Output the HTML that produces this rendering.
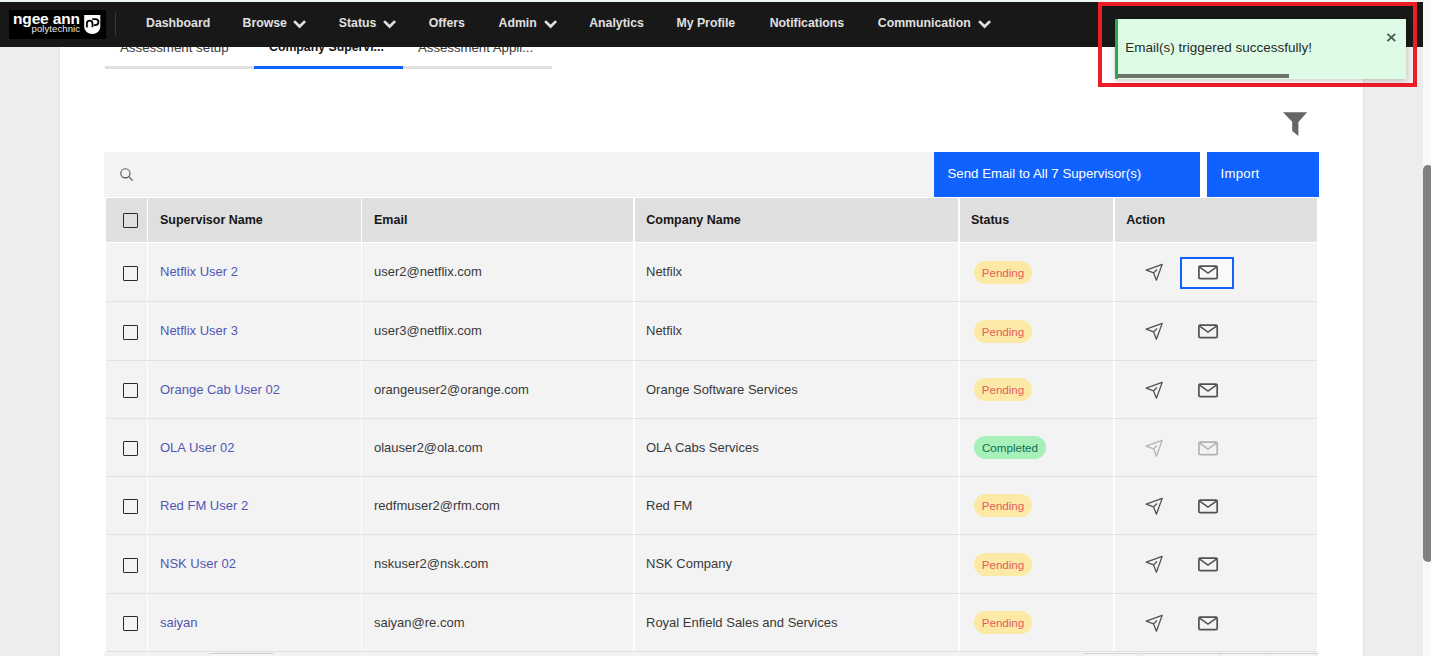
<!DOCTYPE html>
<html><head><meta charset="utf-8">
<style>
*{box-sizing:border-box;margin:0;padding:0}
html,body{width:1431px;height:656px;overflow:hidden;background:#edf5f1;font-family:"Liberation Sans",sans-serif;color:#393939}
.a{position:absolute}
.t{position:absolute;white-space:nowrap;line-height:1}
.nav{position:absolute;left:0;top:2px;width:1423px;height:44.7px;background:#181818}
.navi{position:absolute;top:0;height:44.7px;line-height:43.7px;font-size:12.3px;font-weight:700;color:#e0e0e0;white-space:nowrap}
.chev{position:absolute;top:16.8px}
.cell{position:absolute;background:#f3f3f3}
.hcell{position:absolute;background:#dfdfdf}
.hd{position:absolute;font-size:12.5px;font-weight:700;color:#161616;white-space:nowrap;line-height:1}
.cb{position:absolute;width:15px;height:15px;border:1.5px solid #2b2b2b;border-radius:1px;left:123px}
.sup{position:absolute;left:160px;font-size:13px;color:#4f57b3;white-space:nowrap;line-height:1}
.em{position:absolute;left:374px;font-size:13px;color:#393939;white-space:nowrap;line-height:1}
.co{position:absolute;left:646px;font-size:13px;color:#393939;white-space:nowrap;line-height:1}
.pill{position:absolute;left:974px;height:23px;border-radius:12px;font-size:11.6px;line-height:24px;white-space:nowrap;text-align:center}
.pend{width:58px;background:#fde9a6;color:#e0605e}
.comp{width:72px;background:#a7f0ba;color:#0e6e52}
</style></head><body>

<!-- left/right gray -->
<div class="a" style="left:0;top:46px;width:60px;height:610px;background:#ededeb"></div>
<div class="a" style="left:60px;top:46px;width:1303px;height:610px;background:#ffffff"></div>
<div class="a" style="left:1363px;top:46px;width:60px;height:610px;background:#ededeb"></div>
<div class="a" style="left:59px;top:46px;width:1px;height:610px;background:#e3e3e5"></div>
<div class="a" style="left:1363px;top:46px;width:1px;height:610px;background:#e1e1e4"></div>
<!-- scrollbar -->
<div class="a" style="left:1423px;top:0;width:8px;height:656px;background:#f9f9f9"></div>
<div class="a" style="left:1423px;top:165px;width:10px;height:397px;background:#7f7f7f;border-radius:5px"></div>

<!-- tabs -->
<div class="t" style="left:120px;top:40.5px;font-size:13.3px;color:#393939">Assessment setup</div>
<div class="t" style="left:269px;top:40.5px;font-size:12.3px;font-weight:700;color:#161616">Company Supervi...</div>
<div class="t" style="left:418px;top:40.5px;font-size:13.2px;color:#393939">Assessment Appli...</div>
<div class="a" style="left:104.5px;top:66.3px;width:447.5px;height:2.5px;background:#e0e0e0"></div>
<div class="a" style="left:253.5px;top:66.3px;width:149.5px;height:2.7px;background:#0f62fe"></div>

<!-- nav -->
<div class="nav">
  <div class="a" style="left:9px;top:8px;width:97px;height:29px;background:#000"></div>
  <div class="t" style="left:13px;top:8.6px;font-size:15.5px;font-weight:700;color:#fff;letter-spacing:-0.15px">ngee ann</div>
  <div class="t" style="left:31.5px;top:22.3px;font-size:9.5px;color:#ededed;letter-spacing:0.1px">polytechnic</div>
  <svg class="a" style="left:82px;top:10px" width="22" height="26" viewBox="82 12 22 26">
    <path d="M84.2 14.9 H100.3 V26.5 C100.3 31 96.5 34 92.25 34 C88 34 84.2 31 84.2 26.5 Z" fill="#fff"/>
    <path d="M86.9 27.4 V23.4 C86.9 21.6 88 20.6 89.7 20.6 C91.4 20.6 92.5 21.6 92.5 23.4 V27.2" fill="none" stroke="#000" stroke-width="1.75"/>
    <path d="M92.2 19 H95.2 C97.1 19 98.5 20.3 98.5 22 C98.5 23.7 97.1 25 95.2 25 H93.8" fill="none" stroke="#000" stroke-width="1.75"/>
  </svg>
  <div class="a" style="left:115px;top:11px;width:1px;height:23px;background:#3a3a3a"></div>
  <div class="navi" style="left:146px">Dashboard</div>
  <div class="navi" style="left:242.5px">Browse</div>
  <div class="navi" style="left:338.8px">Status</div>
  <div class="navi" style="left:428.7px">Offers</div>
  <div class="navi" style="left:498.5px">Admin</div>
  <div class="navi" style="left:589.2px">Analytics</div>
  <div class="navi" style="left:676.4px">My Profile</div>
  <div class="navi" style="left:769.7px">Notifications</div>
  <div class="navi" style="left:877.8px">Communication</div>
  <svg class="chev" style="left:292.8px" width="14" height="10" viewBox="0 0 14 10"><path d="M1.1 2.1 L6.6 7.5 L12.1 2.1" fill="none" stroke="#e0e0e0" stroke-width="2.7"/></svg>
  <svg class="chev" style="left:383.4px" width="14" height="10" viewBox="0 0 14 10"><path d="M1.1 2.1 L6.6 7.5 L12.1 2.1" fill="none" stroke="#e0e0e0" stroke-width="2.7"/></svg>
  <svg class="chev" style="left:543.5px" width="14" height="10" viewBox="0 0 14 10"><path d="M1.1 2.1 L6.6 7.5 L12.1 2.1" fill="none" stroke="#e0e0e0" stroke-width="2.7"/></svg>
  <svg class="chev" style="left:977.8px" width="14" height="10" viewBox="0 0 14 10"><path d="M1.1 2.1 L6.6 7.5 L12.1 2.1" fill="none" stroke="#e0e0e0" stroke-width="2.7"/></svg>
</div>

<!-- filter -->
<svg class="a" style="left:1280px;top:110px" width="30" height="28" viewBox="1280 110 30 28">
  <path d="M1283 112.2 H1307.2 L1298.4 122 V136 L1292.2 131 V121.8 Z" fill="#666"/>
</svg>

<!-- search bar -->
<div class="a" style="left:104px;top:152px;width:829.5px;height:45px;background:#f3f3f3"></div>
<svg class="a" style="left:112px;top:160px" width="30" height="30" viewBox="112 160 30 30">
  <circle cx="125.4" cy="173.3" r="4.6" fill="none" stroke="#525252" stroke-width="1.1"/>
  <path d="M128.8 176.7 L132.6 180.6" stroke="#525252" stroke-width="1.2"/>
</svg>
<div class="a" style="left:933.5px;top:152px;width:266.5px;height:45px;background:#0f62fe"></div>
<div class="t" style="left:947.5px;top:167px;font-size:13.25px;color:#fff">Send Email to All 7 Supervisor(s)</div>
<div class="a" style="left:1207px;top:152px;width:111.5px;height:45px;background:#0f62fe"></div>
<div class="t" style="left:1220.5px;top:167px;font-size:13.25px;letter-spacing:0.25px;color:#fff">Import</div>

<!-- table -->
<div class="hcell" style="left:106px;top:198px;width:41px;height:44px"></div>
<div class="hcell" style="left:148px;top:198px;width:212.5px;height:44px"></div>
<div class="hcell" style="left:362px;top:198px;width:271px;height:44px"></div>
<div class="hcell" style="left:635px;top:198px;width:323px;height:44px"></div>
<div class="hcell" style="left:960px;top:198px;width:153px;height:44px"></div>
<div class="hcell" style="left:1115px;top:198px;width:202px;height:44px"></div>
<div class="cb" style="top:213.4px"></div>
<div class="hd" style="left:160px;top:214.0px">Supervisor Name</div>
<div class="hd" style="left:374px;top:214.0px">Email</div>
<div class="hd" style="left:646.3px;top:214.0px">Company Name</div>
<div class="hd" style="left:971px;top:214.0px">Status</div>
<div class="hd" style="left:1126.2px;top:214.0px">Action</div>
<div class="cell" style="left:106px;top:243px;width:41px;height:58px"></div>
<div class="cell" style="left:148px;top:243px;width:212.5px;height:58px"></div>
<div class="cell" style="left:362px;top:243px;width:271px;height:58px"></div>
<div class="cell" style="left:635px;top:243px;width:323px;height:58px"></div>
<div class="cell" style="left:960px;top:243px;width:153px;height:58px"></div>
<div class="cell" style="left:1115px;top:243px;width:202px;height:58px"></div>
<div class="a" style="left:106px;top:301px;width:1211px;height:1px;background:#e2e2e2"></div>
<div class="cb" style="top:265.6px"></div>
<div class="sup" style="top:265.3px">Netflix User 2</div>
<div class="em" style="top:265.3px">user2@netflix.com</div>
<div class="co" style="top:265.3px">Netfilx</div>
<div class="pill pend" style="top:260.9px">Pending</div>
<div class="a" style="left:1180px;top:256.7px;width:54px;height:32px;border:2px solid #0f62fe;background:#f9f9f9"></div>
<svg class="a" style="left:1140px;top:258.0px" width="30" height="28" viewBox="1140 258 30 28"><path d="M1162.2 264.4 L1146.2 270.2 L1153.6 272.9 L1156.4 280.2 Z M1153.6 272.9 L1157 269.5" fill="none" stroke="#525252" stroke-width="1.3" stroke-linejoin="round"/></svg>
<svg class="a" style="left:1190px;top:258.0px" width="36" height="28" viewBox="1190 258 36 28"><rect x="1198.9" y="266.2" width="18.3" height="12.4" rx="1.2" fill="none" stroke="#525252" stroke-width="1.7"/><path d="M1199.3 266.8 L1208 273.1 L1216.8 266.8" fill="none" stroke="#525252" stroke-width="1.6"/></svg>
<div class="cell" style="left:106px;top:302px;width:41px;height:58px"></div>
<div class="cell" style="left:148px;top:302px;width:212.5px;height:58px"></div>
<div class="cell" style="left:362px;top:302px;width:271px;height:58px"></div>
<div class="cell" style="left:635px;top:302px;width:323px;height:58px"></div>
<div class="cell" style="left:960px;top:302px;width:153px;height:58px"></div>
<div class="cell" style="left:1115px;top:302px;width:202px;height:58px"></div>
<div class="a" style="left:106px;top:360px;width:1211px;height:1px;background:#e2e2e2"></div>
<div class="cb" style="top:324.6px"></div>
<div class="sup" style="top:324.3px">Netflix User 3</div>
<div class="em" style="top:324.3px">user3@netflix.com</div>
<div class="co" style="top:324.3px">Netfilx</div>
<div class="pill pend" style="top:319.9px">Pending</div>
<svg class="a" style="left:1140px;top:317.0px" width="30" height="28" viewBox="1140 258 30 28"><path d="M1162.2 264.4 L1146.2 270.2 L1153.6 272.9 L1156.4 280.2 Z M1153.6 272.9 L1157 269.5" fill="none" stroke="#525252" stroke-width="1.3" stroke-linejoin="round"/></svg>
<svg class="a" style="left:1190px;top:317.0px" width="36" height="28" viewBox="1190 258 36 28"><rect x="1198.9" y="266.2" width="18.3" height="12.4" rx="1.2" fill="none" stroke="#525252" stroke-width="1.7"/><path d="M1199.3 266.8 L1208 273.1 L1216.8 266.8" fill="none" stroke="#525252" stroke-width="1.6"/></svg>
<div class="cell" style="left:106px;top:361px;width:41px;height:57px"></div>
<div class="cell" style="left:148px;top:361px;width:212.5px;height:57px"></div>
<div class="cell" style="left:362px;top:361px;width:271px;height:57px"></div>
<div class="cell" style="left:635px;top:361px;width:323px;height:57px"></div>
<div class="cell" style="left:960px;top:361px;width:153px;height:57px"></div>
<div class="cell" style="left:1115px;top:361px;width:202px;height:57px"></div>
<div class="a" style="left:106px;top:418px;width:1211px;height:1px;background:#e2e2e2"></div>
<div class="cb" style="top:383.1px"></div>
<div class="sup" style="top:382.8px">Orange Cab User 02</div>
<div class="em" style="top:382.8px">orangeuser2@orange.com</div>
<div class="co" style="top:382.8px">Orange Software Services</div>
<div class="pill pend" style="top:378.4px">Pending</div>
<svg class="a" style="left:1140px;top:375.5px" width="30" height="28" viewBox="1140 258 30 28"><path d="M1162.2 264.4 L1146.2 270.2 L1153.6 272.9 L1156.4 280.2 Z M1153.6 272.9 L1157 269.5" fill="none" stroke="#525252" stroke-width="1.3" stroke-linejoin="round"/></svg>
<svg class="a" style="left:1190px;top:375.5px" width="36" height="28" viewBox="1190 258 36 28"><rect x="1198.9" y="266.2" width="18.3" height="12.4" rx="1.2" fill="none" stroke="#525252" stroke-width="1.7"/><path d="M1199.3 266.8 L1208 273.1 L1216.8 266.8" fill="none" stroke="#525252" stroke-width="1.6"/></svg>
<div class="cell" style="left:106px;top:419px;width:41px;height:57px"></div>
<div class="cell" style="left:148px;top:419px;width:212.5px;height:57px"></div>
<div class="cell" style="left:362px;top:419px;width:271px;height:57px"></div>
<div class="cell" style="left:635px;top:419px;width:323px;height:57px"></div>
<div class="cell" style="left:960px;top:419px;width:153px;height:57px"></div>
<div class="cell" style="left:1115px;top:419px;width:202px;height:57px"></div>
<div class="a" style="left:106px;top:476px;width:1211px;height:1px;background:#e2e2e2"></div>
<div class="cb" style="top:441.1px"></div>
<div class="sup" style="top:440.8px">OLA User 02</div>
<div class="em" style="top:440.8px">olauser2@ola.com</div>
<div class="co" style="top:440.8px">OLA Cabs Services</div>
<div class="pill comp" style="top:436.4px">Completed</div>
<svg class="a" style="left:1140px;top:433.5px" width="30" height="28" viewBox="1140 258 30 28"><path d="M1162.2 264.4 L1146.2 270.2 L1153.6 272.9 L1156.4 280.2 Z M1153.6 272.9 L1157 269.5" fill="none" stroke="#b3b3b3" stroke-width="1.3" stroke-linejoin="round"/></svg>
<svg class="a" style="left:1190px;top:433.5px" width="36" height="28" viewBox="1190 258 36 28"><rect x="1198.9" y="266.2" width="18.3" height="12.4" rx="1.2" fill="none" stroke="#b3b3b3" stroke-width="1.7"/><path d="M1199.3 266.8 L1208 273.1 L1216.8 266.8" fill="none" stroke="#b3b3b3" stroke-width="1.6"/></svg>
<div class="cell" style="left:106px;top:477px;width:41px;height:57px"></div>
<div class="cell" style="left:148px;top:477px;width:212.5px;height:57px"></div>
<div class="cell" style="left:362px;top:477px;width:271px;height:57px"></div>
<div class="cell" style="left:635px;top:477px;width:323px;height:57px"></div>
<div class="cell" style="left:960px;top:477px;width:153px;height:57px"></div>
<div class="cell" style="left:1115px;top:477px;width:202px;height:57px"></div>
<div class="a" style="left:106px;top:534px;width:1211px;height:1px;background:#e2e2e2"></div>
<div class="cb" style="top:499.1px"></div>
<div class="sup" style="top:498.8px">Red FM User 2</div>
<div class="em" style="top:498.8px">redfmuser2@rfm.com</div>
<div class="co" style="top:498.8px">Red FM</div>
<div class="pill pend" style="top:494.4px">Pending</div>
<svg class="a" style="left:1140px;top:491.5px" width="30" height="28" viewBox="1140 258 30 28"><path d="M1162.2 264.4 L1146.2 270.2 L1153.6 272.9 L1156.4 280.2 Z M1153.6 272.9 L1157 269.5" fill="none" stroke="#525252" stroke-width="1.3" stroke-linejoin="round"/></svg>
<svg class="a" style="left:1190px;top:491.5px" width="36" height="28" viewBox="1190 258 36 28"><rect x="1198.9" y="266.2" width="18.3" height="12.4" rx="1.2" fill="none" stroke="#525252" stroke-width="1.7"/><path d="M1199.3 266.8 L1208 273.1 L1216.8 266.8" fill="none" stroke="#525252" stroke-width="1.6"/></svg>
<div class="cell" style="left:106px;top:535px;width:41px;height:58px"></div>
<div class="cell" style="left:148px;top:535px;width:212.5px;height:58px"></div>
<div class="cell" style="left:362px;top:535px;width:271px;height:58px"></div>
<div class="cell" style="left:635px;top:535px;width:323px;height:58px"></div>
<div class="cell" style="left:960px;top:535px;width:153px;height:58px"></div>
<div class="cell" style="left:1115px;top:535px;width:202px;height:58px"></div>
<div class="a" style="left:106px;top:593px;width:1211px;height:1px;background:#e2e2e2"></div>
<div class="cb" style="top:557.6px"></div>
<div class="sup" style="top:557.3px">NSK User 02</div>
<div class="em" style="top:557.3px">nskuser2@nsk.com</div>
<div class="co" style="top:557.3px">NSK Company</div>
<div class="pill pend" style="top:552.9px">Pending</div>
<svg class="a" style="left:1140px;top:550.0px" width="30" height="28" viewBox="1140 258 30 28"><path d="M1162.2 264.4 L1146.2 270.2 L1153.6 272.9 L1156.4 280.2 Z M1153.6 272.9 L1157 269.5" fill="none" stroke="#525252" stroke-width="1.3" stroke-linejoin="round"/></svg>
<svg class="a" style="left:1190px;top:550.0px" width="36" height="28" viewBox="1190 258 36 28"><rect x="1198.9" y="266.2" width="18.3" height="12.4" rx="1.2" fill="none" stroke="#525252" stroke-width="1.7"/><path d="M1199.3 266.8 L1208 273.1 L1216.8 266.8" fill="none" stroke="#525252" stroke-width="1.6"/></svg>
<div class="cell" style="left:106px;top:594px;width:41px;height:57px"></div>
<div class="cell" style="left:148px;top:594px;width:212.5px;height:57px"></div>
<div class="cell" style="left:362px;top:594px;width:271px;height:57px"></div>
<div class="cell" style="left:635px;top:594px;width:323px;height:57px"></div>
<div class="cell" style="left:960px;top:594px;width:153px;height:57px"></div>
<div class="cell" style="left:1115px;top:594px;width:202px;height:57px"></div>
<div class="a" style="left:106px;top:651px;width:1211px;height:1px;background:#e2e2e2"></div>
<div class="cb" style="top:616.1px"></div>
<div class="sup" style="top:615.8px">saiyan</div>
<div class="em" style="top:615.8px">saiyan@re.com</div>
<div class="co" style="top:615.8px">Royal Enfield Sales and Services</div>
<div class="pill pend" style="top:611.4px">Pending</div>
<svg class="a" style="left:1140px;top:608.5px" width="30" height="28" viewBox="1140 258 30 28"><path d="M1162.2 264.4 L1146.2 270.2 L1153.6 272.9 L1156.4 280.2 Z M1153.6 272.9 L1157 269.5" fill="none" stroke="#525252" stroke-width="1.3" stroke-linejoin="round"/></svg>
<svg class="a" style="left:1190px;top:608.5px" width="36" height="28" viewBox="1190 258 36 28"><rect x="1198.9" y="266.2" width="18.3" height="12.4" rx="1.2" fill="none" stroke="#525252" stroke-width="1.7"/><path d="M1199.3 266.8 L1208 273.1 L1216.8 266.8" fill="none" stroke="#525252" stroke-width="1.6"/></svg>
<!-- bottom pagination -->
<div class="a" style="left:106px;top:651px;width:1211px;height:1px;background:#e0e0e0"></div>
<div class="a" style="left:104px;top:652px;width:1214px;height:4px;background:#f3f3f3"></div>
<div class="a" style="left:209px;top:653px;width:65px;height:3px;border-top:1px solid #cfcfcf;border-left:1px solid #e6e6e6;border-right:1px solid #e6e6e6;background:#f6f6f6"></div>
<div class="a" style="left:1083px;top:653px;width:58px;height:3px;border-top:1px solid #d6d6d6;border-right:1px solid #e0e0e0"></div>
<div class="a" style="left:1142px;top:653px;width:79px;height:3px;border-top:1px solid #d6d6d6;border-right:1px solid #e0e0e0"></div>
<div class="a" style="left:1221px;top:653px;width:49px;height:3px;border-top:1px solid #d6d6d6;border-right:1px solid #e0e0e0"></div>
<div class="a" style="left:1270px;top:653px;width:48px;height:3px;border-top:1px solid #d6d6d6"></div>

<!-- toast -->
<div class="a" style="left:1098px;top:2px;width:319px;height:85px;border:4px solid #ee1c25"></div>
<div class="a" style="left:1115px;top:18.8px;width:291px;height:60px;background:#defbe6;border-left:3px solid #2aa84e;box-shadow:0 2px 6px rgba(0,0,0,0.2)"></div>
<div class="t" style="left:1125.2px;top:41.4px;font-size:13.5px;color:#2a2a2a">Email(s) triggered successfully!</div>
<div class="a" style="left:1118px;top:74px;width:171px;height:4px;background:#6a736b"></div>
<svg class="a" style="left:1382px;top:29px" width="18" height="18" viewBox="1382 29 18 18">
  <path d="M1387.4 33.8 L1395.2 41.2 M1395.2 33.8 L1387.4 41.2" stroke="#4b5a50" stroke-width="1.8"/>
</svg>
</body></html>
